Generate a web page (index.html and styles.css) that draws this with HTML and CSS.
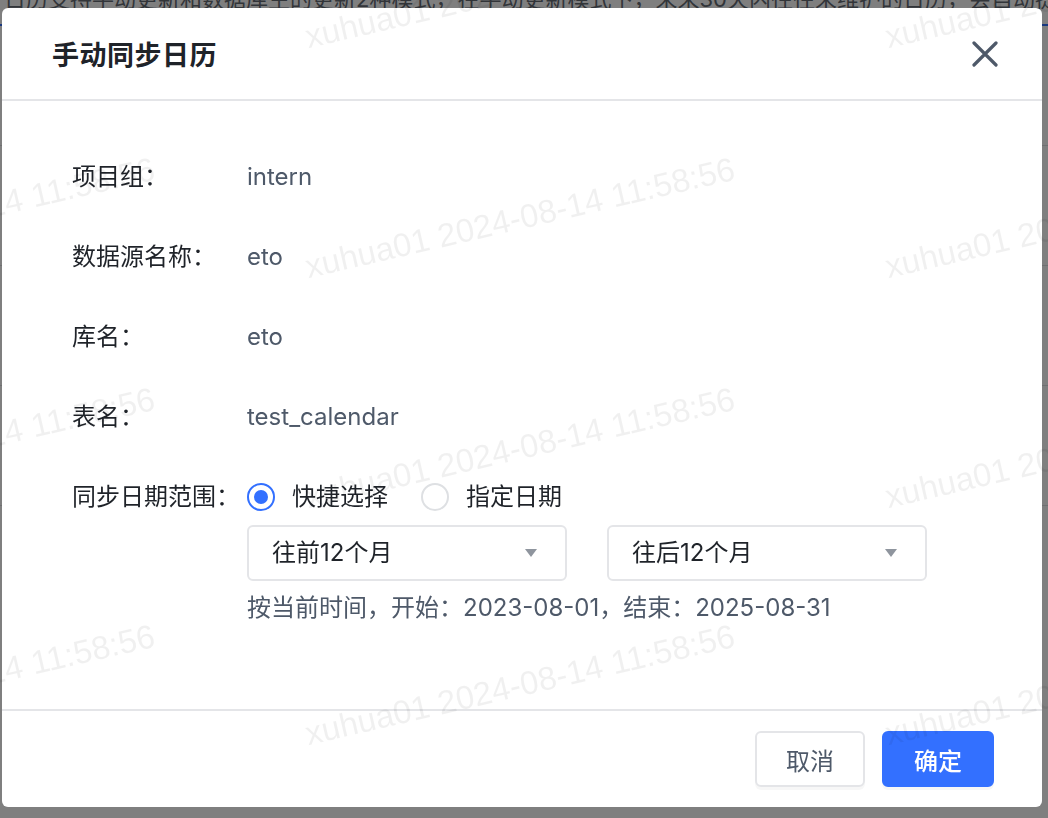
FILE: index.html
```html
<!DOCTYPE html>
<html lang="zh-CN">
<head>
    <meta charset="UTF-8">
    <meta name="viewport" content="width=device-width, initial-scale=1.0">
    <title>手动同步日历</title>
    <link rel="stylesheet" href="styles.css">
</head>
<body>

    <!-- 背后的页面 -->
    <div class="page">
        <p class="page-tip">日历支持手动更新和数据库生的更新2种模式，在手动更新模式下，未来30天内往往未维护的日历，会自动提醒</p>
        <div class="page-table">
            <div class="page-row"></div>
            <div class="page-row"></div>
            <div class="page-row"></div>
            <div class="page-row"></div>
        </div>
    </div>

    <div class="mask">
        <div class="modal">
            <div class="modal-header">
                <h3>手动同步日历</h3>
                <span class="close-btn">
                    <svg width="26" height="26" viewBox="0 0 26 26">
                        <path d="M2 2 L24 24 M24 2 L2 24" stroke="#4e5969" stroke-width="3.2" stroke-linecap="round" fill="none"/>
                    </svg>
                </span>
            </div>

            <div class="modal-body">
                <div class="form-row">
                    <label>项目组：</label>
                    <span class="value">intern</span>
                </div>
                <div class="form-row">
                    <label>数据源名称：</label>
                    <span class="value">eto</span>
                </div>
                <div class="form-row">
                    <label>库名：</label>
                    <span class="value">eto</span>
                </div>
                <div class="form-row">
                    <label>表名：</label>
                    <span class="value">test_calendar</span>
                </div>
                <div class="form-row">
                    <label>同步日期范围：</label>
                    <div class="range">
                        <div class="radio-group">
                            <span class="radio checked"><i></i>快捷选择</span>
                            <span class="radio"><i></i>指定日期</span>
                        </div>
                        <div class="select-group">
                            <div class="select">往前12个月<b class="arrow"></b></div>
                            <div class="select">往后12个月<b class="arrow"></b></div>
                        </div>
                        <p class="hint">按当前时间，开始：2023-08-01，结束：2025-08-31</p>
                    </div>
                </div>
            </div>

            <div class="modal-footer">
                <button class="btn">取消</button>
                <button class="btn btn-primary">确定</button>
            </div>
        </div>
    </div>

    <!-- 水印 -->
    <div class="watermark">
        <span style="left:-300px;top:-112px">xuhua01 2024-08-14 11:58:56</span>
        <span style="left:280px;top:-112px">xuhua01 2024-08-14 11:58:56</span>
        <span style="left:860px;top:-112px">xuhua01 2024-08-14 11:58:56</span>
        <span style="left:-300px;top:118px">xuhua01 2024-08-14 11:58:56</span>
        <span style="left:280px;top:118px">xuhua01 2024-08-14 11:58:56</span>
        <span style="left:860px;top:118px">xuhua01 2024-08-14 11:58:56</span>
        <span style="left:-300px;top:348px">xuhua01 2024-08-14 11:58:56</span>
        <span style="left:280px;top:348px">xuhua01 2024-08-14 11:58:56</span>
        <span style="left:860px;top:348px">xuhua01 2024-08-14 11:58:56</span>
        <span style="left:-300px;top:585px">xuhua01 2024-08-14 11:58:56</span>
        <span style="left:280px;top:585px">xuhua01 2024-08-14 11:58:56</span>
        <span style="left:860px;top:585px">xuhua01 2024-08-14 11:58:56</span>
    </div>

</body>
</html>
```

FILE: styles.css
```css
* {
    box-sizing: border-box;
}

body {
    margin: 0;
    padding: 0;
    height: 100vh;
    overflow: hidden;
    font-family: "Inter", "Noto Sans CJK SC", sans-serif;
    background-color: #fff;
    color: #1f2329;
}

/* 背后的页面 */
.page {
    height: 100%;
}

.page-tip {
    margin: 0;
    margin-top: -16px;
    padding-left: 4px;
    font-size: 22px;
    line-height: 30px;
    color: #646a73;
    white-space: nowrap;
}

.page-table {
    margin-top: 10px;
    border-top: 2px solid #3370ff;
}

.page-row {
    height: 120px;
    border-bottom: 1px solid #dee0e3;
}

/* 遮罩 + 弹窗 */
.mask {
    position: fixed;
    top: 0;
    left: 0;
    right: 0;
    bottom: 0;
    background-color: rgba(0, 0, 0, 0.5);
    padding: 8px 0 0 2px;
}

.modal {
    width: 1040px;
    height: 799px;
    background-color: #fff;
    border-radius: 6px;
    display: flex;
    flex-direction: column;
}

.modal-header {
    height: 93px;
    padding: 0 44px 0 50px;
    border-bottom: 2px solid #e4e5e8;
    display: flex;
    align-items: center;
    justify-content: space-between;
}

.modal-header h3 {
    margin: 0;
    font-size: 27px;
    font-weight: 600;
    letter-spacing: 0.5px;
    color: #1f2329;
}

.close-btn {
    display: flex;
    cursor: pointer;
}

.modal-body {
    flex: 1;
    padding: 56px 0 0 70px;
}

.form-row {
    display: flex;
    align-items: flex-start;
    margin-bottom: 40px;
    font-size: 24px;
    line-height: 40px;
}

.form-row label {
    width: 175px;
    flex-shrink: 0;
    color: #1f2329;
}

.value {
    color: #4e5969;
}

.radio-group {
    display: flex;
    gap: 33px;
    height: 40px;
    align-items: center;
}

.radio {
    display: flex;
    align-items: center;
    color: #1f2329;
}

.radio i {
    width: 28px;
    height: 28px;
    border-radius: 50%;
    border: 2px solid #dee0e3;
    margin-right: 17px;
    display: flex;
    align-items: center;
    justify-content: center;
}

.radio.checked i {
    border-color: #3370ff;
}

.radio.checked i::after {
    content: "";
    width: 14px;
    height: 14px;
    border-radius: 50%;
    background-color: #3370ff;
}

.select-group {
    display: flex;
    gap: 40px;
    margin-top: 8px;
}

.select {
    width: 320px;
    height: 56px;
    border: 2px solid #e4e5e8;
    border-radius: 6px;
    padding: 0 28px 0 23px;
    display: flex;
    align-items: center;
    justify-content: space-between;
    color: #1f2329;
}

.arrow {
    width: 0;
    height: 0;
    border-left: 6px solid transparent;
    border-right: 6px solid transparent;
    border-top: 8px solid #8f959e;
}

.hint {
    margin: 12px 0 0;
    line-height: 30px;
    color: #4e5969;
}

.modal-footer {
    height: 98px;
    border-top: 2px solid #e4e5e8;
    padding-right: 48px;
    display: flex;
    align-items: center;
    justify-content: flex-end;
    gap: 17px;
}

.btn {
    width: 110px;
    height: 56px;
    border: 2px solid #e4e5e8;
    border-radius: 6px;
    background-color: #fff;
    font-family: inherit;
    font-size: 24px;
    color: #4e5969;
    box-shadow: 0 3px 0 rgba(0, 0, 0, 0.03);
    cursor: pointer;
}

.btn-primary {
    width: 112px;
    border-color: #3370ff;
    background-color: #3370ff;
    color: #fff;
    font-weight: 500;
}

/* 水印 */
.watermark {
    position: fixed;
    top: 0;
    left: 0;
    right: 0;
    bottom: 0;
    pointer-events: none;
    overflow: hidden;
}

.watermark span {
    position: absolute;
    width: 480px;
    height: 200px;
    display: flex;
    align-items: center;
    justify-content: center;
    font-family: "Liberation Sans", sans-serif;
    font-size: 33px;
    color: rgba(0, 0, 0, 0.06);
    white-space: nowrap;
    transform: rotate(-13deg);
}
```
